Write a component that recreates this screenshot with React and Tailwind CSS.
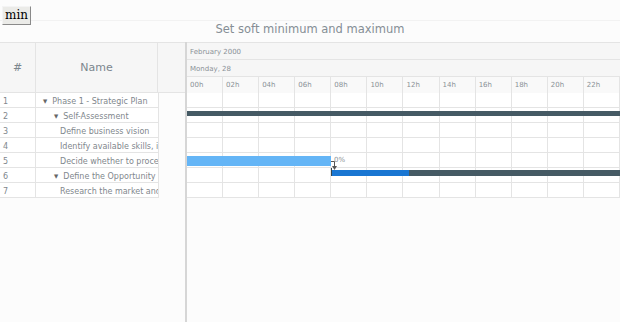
const rows = [
  { n: 1, name: 'Phase 1 - Strategic Plan', pad: 'pl-[7px]', arrow: true },
  { n: 2, name: 'Self-Assessment', pad: 'pl-[18px]', arrow: true },
  { n: 3, name: 'Define business vision', pad: 'pl-[24px]' },
  { n: 4, name: 'Identify available skills, information and support', pad: 'pl-[24px]' },
  { n: 5, name: 'Decide whether to proceed', pad: 'pl-[24px]' },
  { n: 6, name: 'Define the Opportunity', pad: 'pl-[18px]', arrow: true },
  { n: 7, name: 'Research the market and competition', pad: 'pl-[24px]' },
]

const hours = ['00h', '02h', '04h', '06h', '08h', '10h', '12h', '14h', '16h', '18h', '20h', '22h']

const HourCells = () => (
  <div className="absolute inset-0 flex">
    {hours.map(h => (
      <div key={h} className="flex-1 border-r border-[#e4e4e4]"></div>
    ))}
  </div>
)

const App = () => {
  return (
    <div className="w-[620px] h-[322px] bg-[#fcfcfc] overflow-hidden flex flex-col" style={{ fontFamily: '"DejaVu Sans", sans-serif' }}>
      {/* Toolbar */}
      <div className="h-[21px] pl-[2px] pt-[2px] border-b border-[#f2f2f2]">
        <button
          className="h-[19px] px-[2px] bg-[#ebebe8] border border-t-[#f4f4f4] border-l-[#f4f4f4] border-r-[#8a8a8a] border-b-[#8a8a8a] text-[12px] leading-[14px] text-black"
          style={{ fontFamily: '"DejaVu Serif", serif' }}
        >
          min
        </button>
      </div>

      {/* Title */}
      <div className="h-[21px] pt-[1px] text-center text-[11.5px] leading-[14px] text-[#858e95]">
        Set soft minimum and maximum
      </div>

      {/* Chart */}
      <div className="flex-1 flex">
        {/* Data grid */}
        <div className="w-[185px] flex flex-col">
          <div className="h-[51px] flex bg-[#f6f6f6] border-t border-b border-[#e4e4e4]">
            <div className="w-[36px] border-r border-[#e4e4e4] flex items-center justify-center pt-[1px] text-[11px] text-[#7c868e]">#</div>
            <div className="w-[122px] border-r border-[#e4e4e4] flex items-center justify-center pt-[1px] text-[11px] text-[#7c868e]">Name</div>
            <div className="flex-1"></div>
          </div>
          <div className="w-[159px] bg-white">
            {rows.map(r => (
              <div key={r.n} className="h-[15px] flex border-b border-[#e4e4e4] text-[8px] leading-[13px] pt-[2px] text-[#7f878d] overflow-hidden">
                <div className="w-[36px] border-r border-[#e4e4e4] pl-[3px] -mt-[2px] pt-[2px]">{r.n}</div>
                <div className={`w-[123px] border-r border-[#e4e4e4] -mt-[2px] pt-[2px] overflow-hidden whitespace-nowrap ${r.pad}`}>
                  {r.arrow && <span className="relative -top-[1px] text-[5.5px] mr-[5px] text-[#666]">▼</span>}
                  {r.name}
                </div>
              </div>
            ))}
          </div>
        </div>

        {/* Splitter */}
        <div className="w-[2px] bg-[#d6d6d6]"></div>

        {/* Timeline */}
        <div className="flex-1 flex flex-col relative">
          <div className="h-[51px] flex flex-col border-t border-b border-[#e4e4e4] text-[7px] text-[#8a9197]">
            <div className="h-[17px] bg-[#f6f6f6] border-b border-[#e4e4e4] pl-[3px] pt-[1px] leading-[16px]">February 2000</div>
            <div className="h-[17px] bg-[#f6f6f6] border-b border-[#e4e4e4] pl-[3px] pt-[1px] leading-[16px]">Monday, 28</div>
            <div className="flex-1 flex bg-[#f9f9f9]">
              {hours.map(h => (
                <div key={h} className="flex-1 border-r border-[#e4e4e4] pl-[3px] pt-[1px] leading-[15px]">{h}</div>
              ))}
            </div>
          </div>
          <div className="bg-white">
            {rows.map(r => (
              <div key={r.n} className="h-[15px] relative border-b border-[#e4e4e4]">
                <HourCells />
                {r.n === 2 && (
                  <div className="absolute left-0 right-0 top-[3px] h-[5px] bg-[#455a64]"></div>
                )}
                {r.n === 5 && (
                  <>
                    <div className="absolute left-0 w-[144px] top-[3px] h-[10px] bg-[#64b5f6]"></div>
                    <div className="absolute left-[147px] top-[1px] text-[7px] leading-[12px] text-[#8a9197]">0%</div>
                  </>
                )}
                {r.n === 6 && (
                  <div className="absolute left-[144px] right-0 top-[2px] h-[6px] bg-[#455a64]">
                    <div className="w-[78px] h-full bg-[#1976d2]"></div>
                  </div>
                )}
              </div>
            ))}
          </div>
          {/* Connector */}
          <svg className="absolute left-0 top-0" width="433" height="160">
            <path d="M144 119.5 H147.5 V127" stroke="#555" strokeWidth="1" fill="none" />
            <path d="M145 124 L150 124 L147.5 128 Z" fill="#555" />
            <path d="M144.5 126 V134" stroke="#37474f" strokeWidth="1" />
          </svg>
        </div>
      </div>
    </div>
  )
}

export default App
